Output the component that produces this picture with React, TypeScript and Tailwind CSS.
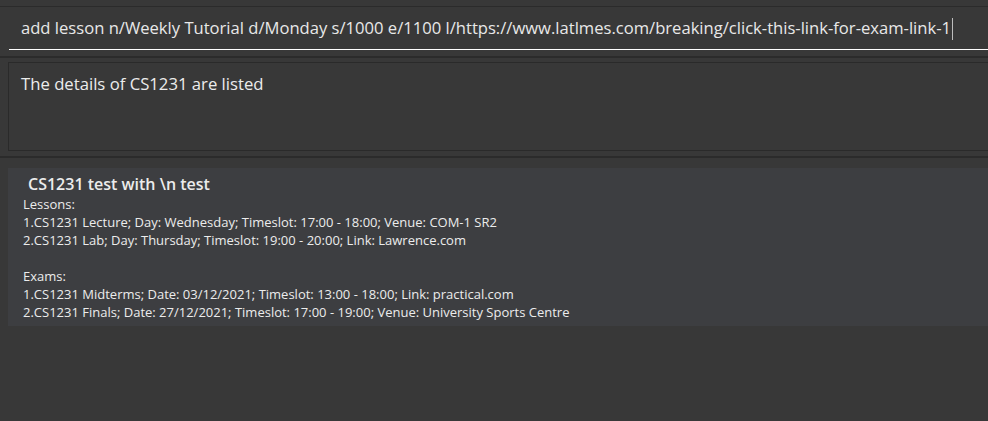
export default function App() {
  const font = { fontFamily: '"Open Sans", "Noto Sans", sans-serif' };
  return (
    <div className="w-[988px] h-[421px] bg-[#383838] overflow-hidden flex flex-col" style={font}>
      <div className="h-[6px]" />
      <div className="h-px bg-[#2b2b2b]" />
      <div className="h-[49px] pl-[9px] flex flex-col">
        <div className="h-[42px] flex items-center pl-[12px] pt-[1px] text-[16.6px] text-[#e8e8e8] whitespace-nowrap">
          <span>add lesson n/Weekly Tutorial d/Monday s/1000 e/1100 l/https://www.latlmes.com/breaking/click-this-link-for-exam-link-1</span>
          <span className="inline-block w-px h-[22px] bg-[#bdbdbd] ml-[1px]" />
        </div>
        <div className="h-px bg-white" />
      </div>
      <div className="h-[2px] bg-[#2b2b2b]" />
      <div className="pt-[4px] pl-[8px]">
        <div className="h-[89px] border border-[#2a2a2a] border-r-0 px-[12px] pt-[8px] text-[16.7px] text-[#ececec]">
          The details of CS1231 are listed
        </div>
      </div>
      <div className="h-[5px]" />
      <div className="h-[2px] bg-[#2b2b2b]" />
      <div className="pt-[10px] pl-[8px]">
        <div className="bg-[#3d3e41] h-[158px] pl-[15px] pt-[5px] text-[#ececec]">
          <div className="text-[16px] font-semibold pl-[5px] leading-[22px]">CS1231 test with \n test</div>
          <div className="text-[13px] leading-[18px]">
            <div>Lessons:</div>
            <div>1.CS1231 Lecture; Day: Wednesday; Timeslot: 17:00 - 18:00; Venue: COM-1 SR2</div>
            <div>2.CS1231 Lab; Day: Thursday; Timeslot: 19:00 - 20:00; Link: Lawrence.com</div>
            <div>&nbsp;</div>
            <div>Exams:</div>
            <div>1.CS1231 Midterms; Date: 03/12/2021; Timeslot: 13:00 - 18:00; Link: practical.com</div>
            <div>2.CS1231 Finals; Date: 27/12/2021; Timeslot: 17:00 - 19:00; Venue: University Sports Centre</div>
          </div>
        </div>
      </div>
    </div>
  );
}
